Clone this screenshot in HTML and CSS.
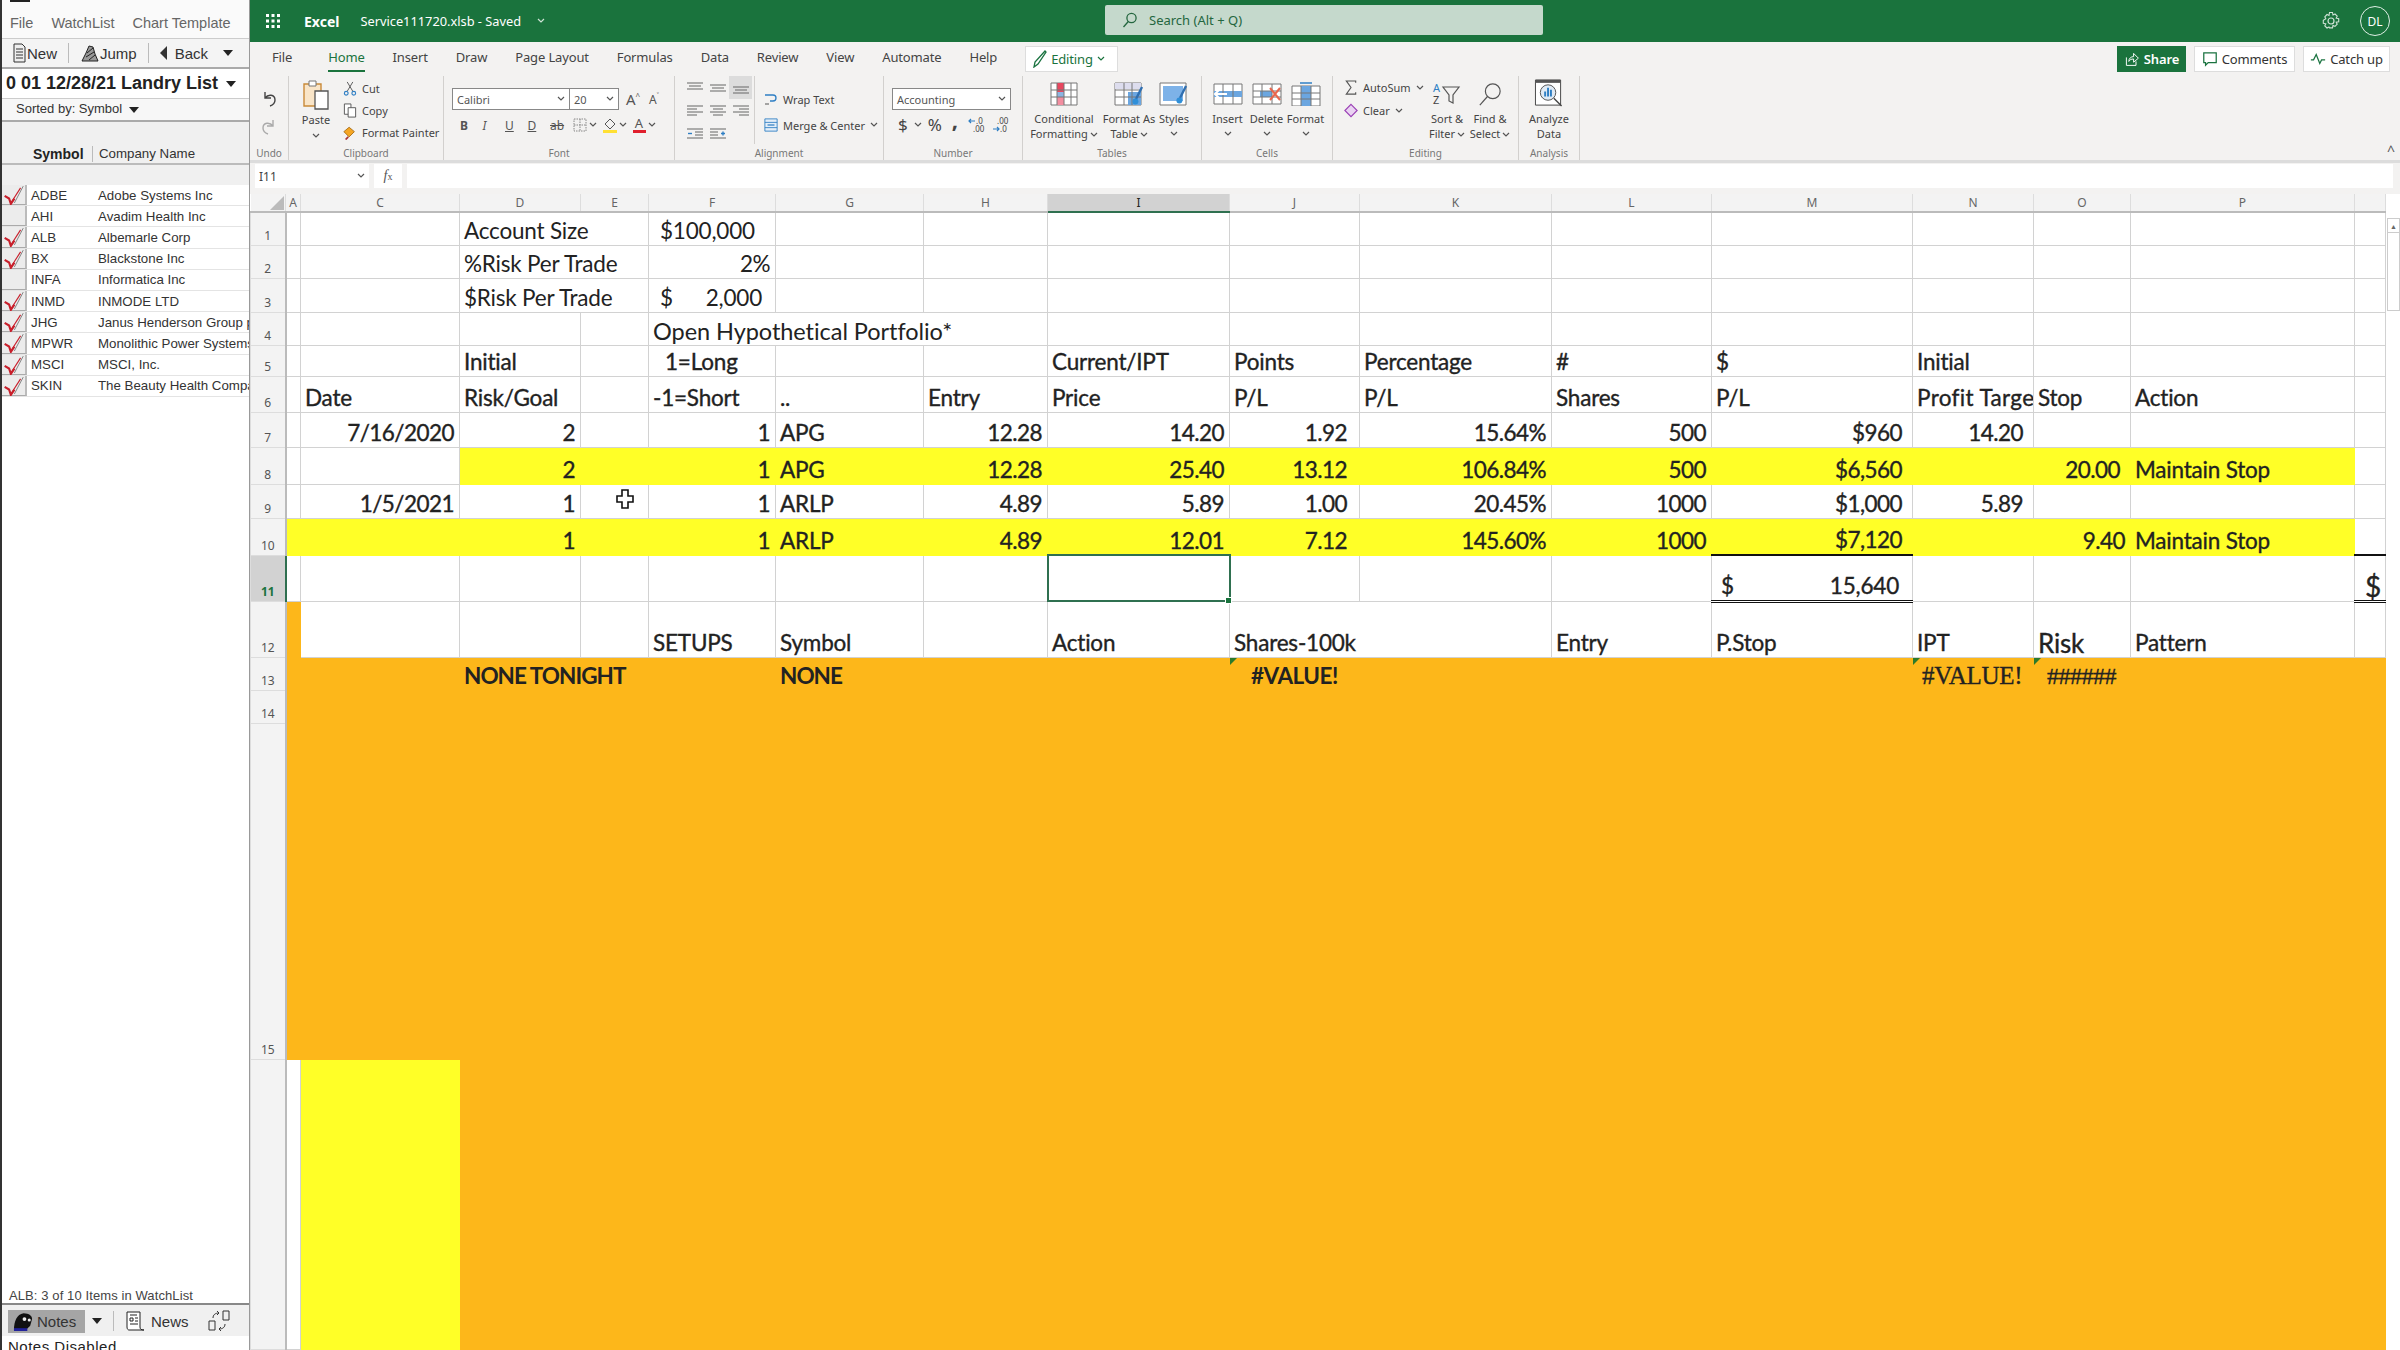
FILE: index.html
```html
<!DOCTYPE html>
<html lang="en">
<head>
  <meta charset="UTF-8" />
  <title>Excel - Service111720.xlsb</title>
  <link rel="stylesheet" href="styles.css">
</head>
<body>

  <svg class="defs" width="0" height="0">
    <symbol id="chev" viewBox="0 0 8 6"><path d="M1 1l3 3 3-3" fill="none" stroke="currentColor" stroke-width="1.2"/></symbol>
    <symbol id="check" viewBox="0 0 26 22"><path d="M14 20L24 1" stroke="#777" stroke-width="1"/><path d="M3 12l5 3 2 6 4-6" fill="none" stroke="#c8202c" stroke-width="2.4"/><path d="M10 20L21 3" stroke="#c8202c" stroke-width="1.3"/></symbol>
    <symbol id="lines-l" viewBox="0 0 18 14"><path d="M1 2h16M1 5h10M1 8h16M1 11h10" stroke="#666" stroke-width="1.2"/></symbol>
    <symbol id="lines-c" viewBox="0 0 18 14"><path d="M1 2h16M4 5h10M1 8h16M4 11h10" stroke="#666" stroke-width="1.2"/></symbol>
    <symbol id="lines-r" viewBox="0 0 18 14"><path d="M1 2h16M7 5h10M1 8h16M7 11h10" stroke="#666" stroke-width="1.2"/></symbol>
    <symbol id="brush" viewBox="0 0 12 20"><path d="M10 1L4 13" stroke="#2f6fb0" stroke-width="2.4"/><circle cx="3.4" cy="15.5" r="3" fill="#2f8fd8"/></symbol>
  </svg>

  <aside class="watch">
    <div class="watch-menu">
      <span>File</span><span>WatchList</span><span>Chart Template</span>
    </div>
    <div class="watch-tools">
      <svg class="w-ico" viewBox="0 0 16 20"><path d="M3 1h8l3 3v15H3zM5 6h7M5 9h7M5 12h7M5 15h7" fill="#eee" stroke="#333"/></svg>
      <span class="t-new">New</span>
      <i class="w-sep"></i>
      <svg class="w-ico jump" viewBox="0 0 20 20"><path d="M2 18l4-8 3-7 4 1 2 7 3 7z" fill="#999" stroke="#222"/><path d="M7 10l6-5M6 14l8-5M9 17l6-5" stroke="#222"/></svg>
      <span class="t-jump">Jump</span>
      <i class="w-sep"></i>
      <span class="tri-left"></span>
      <span class="t-back">Back</span>
      <span class="tri-down"></span>
    </div>
    <div class="watch-title">0 01 12/28/21 Landry List <span class="tri-down small"></span></div>
    <div class="watch-sort">Sorted by: Symbol <span class="tri-down small"></span></div>
    <div class="watch-band"></div>
    <div class="watch-head"><b>Symbol</b><span>Company Name</span></div>
    <div class="watch-band short"></div>
    <ul class="watch-list">
      <li><span class="ck"><svg><use href="#check"/></svg></span><span class="sym">ADBE</span><span class="co">Adobe Systems Inc</span></li>
      <li><span class="ck"></span><span class="sym">AHI</span><span class="co">Avadim Health Inc</span></li>
      <li><span class="ck"><svg><use href="#check"/></svg></span><span class="sym">ALB</span><span class="co">Albemarle Corp</span></li>
      <li><span class="ck"><svg><use href="#check"/></svg></span><span class="sym">BX</span><span class="co">Blackstone Inc</span></li>
      <li><span class="ck"></span><span class="sym">INFA</span><span class="co">Informatica Inc</span></li>
      <li><span class="ck"><svg><use href="#check"/></svg></span><span class="sym">INMD</span><span class="co">INMODE LTD</span></li>
      <li><span class="ck"><svg><use href="#check"/></svg></span><span class="sym">JHG</span><span class="co">Janus Henderson Group plc</span></li>
      <li><span class="ck"><svg><use href="#check"/></svg></span><span class="sym">MPWR</span><span class="co">Monolithic Power Systems Inc</span></li>
      <li><span class="ck"><svg><use href="#check"/></svg></span><span class="sym">MSCI</span><span class="co">MSCI, Inc.</span></li>
      <li><span class="ck"><svg><use href="#check"/></svg></span><span class="sym">SKIN</span><span class="co">The Beauty Health Company</span></li>
    </ul>
    <div class="watch-status">ALB: 3 of 10 Items in WatchList</div>
    <div class="watch-bottom">
      <span class="notes-btn">
        <svg viewBox="0 0 22 20"><path d="M1 19c0-8 3-16 10-17 6 0 9 3 9 6l-2 7-4 4z" fill="#111"/><path d="M1 19h14" stroke="#22229a" stroke-width="3"/><circle cx="12" cy="8" r="2" fill="#eee"/><circle cx="17" cy="9" r="1.6" fill="#eee"/></svg>
        Notes
      </span>
      <span class="tri-down"></span>
      <i class="w-sep"></i>
      <svg class="news-ico" viewBox="0 0 20 20"><path d="M2 1h13v15c0 2 1 3 4 3H4c-1 0-2-1-2-3zM5 4h7M5 7h3v3H5zM10 7h3M10 10h3M5 13h8" fill="#fff" stroke="#222"/></svg>
      <span class="news-txt">News</span>
      <svg class="swap-ico" viewBox="0 0 22 22"><path d="M1 11h6v9H1zM15 1h6v9h-6zM5 8c0-3 2-5 6-5M11 3l-2-2M11 3L9 5M17 14c0 3-2 5-6 5M11 19l2-2M11 19l2 2" fill="none" stroke="#333"/></svg>
    </div>
    <div class="watch-notes">Notes Disabled</div>
  </aside>

  <main class="excel">
    <header class="titlebar">
      <svg class="waffle" viewBox="0 0 14 14" fill="#fff"><rect width="3" height="3"/><rect x="5.5" width="3" height="3"/><rect x="11" width="3" height="3"/><rect y="5.5" width="3" height="3"/><rect x="5.5" y="5.5" width="3" height="3"/><rect x="11" y="5.5" width="3" height="3"/><rect y="11" width="3" height="3"/><rect x="5.5" y="11" width="3" height="3"/><rect x="11" y="11" width="3" height="3"/></svg>
      <strong class="app">Excel</strong>
      <span class="doc">Service111720.xlsb - Saved</span>
      <svg class="doc-chev"><use href="#chev"/></svg>
      <div class="search">
        <svg viewBox="0 0 16 16"><circle cx="9.5" cy="6" r="4.6" fill="none" stroke="#24663f" stroke-width="1.3"/><path d="M6.3 9.5L1.5 15" stroke="#24663f" stroke-width="1.3"/></svg>
        Search (Alt + Q)
      </div>
      <svg class="gear" viewBox="0 0 20 20"><circle cx="10" cy="10" r="3" fill="none" stroke="#cfe3d6" stroke-width="1.2"/><path d="M8.5 1.5h3l.5 2.5 2-1 2.2 2.2-1 2 2.5.5v3l-2.5.5 1 2-2.2 2.2-2-1-.5 2.5h-3L8 16l-2 1-2.2-2.2 1-2-2.5-.5v-3L4.800 7.800l-1-2L6 3.500l2 1z" fill="none" stroke="#cfe3d6" stroke-width="1.1"/></svg>
      <span class="avatar">DL</span>
    </header>

    <nav class="tabs">
      <span class="tab t-file">File</span>
      <span class="tab active">Home</span>
      <span class="tab">Insert</span>
      <span class="tab">Draw</span>
      <span class="tab">Page Layout</span>
      <span class="tab">Formulas</span>
      <span class="tab">Data</span>
      <span class="tab">Review</span>
      <span class="tab">View</span>
      <span class="tab">Automate</span>
      <span class="tab">Help</span>
      <span class="editing">
        <svg viewBox="0 0 14 18"><path d="M12 1l1 1L5 14l-4 3 1-5z" fill="none" stroke="#1a7340" stroke-width="1.3"/></svg>
        Editing
        <svg class="chev"><use href="#chev"/></svg>
      </span>
      <div class="tab-actions">
        <span class="act share">
          <svg viewBox="0 0 18 20"><path d="M2 8v10h12v-5M5 13c0-4 3-6 6-6V3l6 6-6 5v-4c-3 0-5 1-6 3z" fill="none" stroke="#fff" stroke-width="1.2"/></svg>
          Share
        </span>
        <span class="act comments">
          <svg viewBox="0 0 18 18"><path d="M2 2h14v11H7l-3 3v-3H2z" fill="none" stroke="#1a7340" stroke-width="1.4"/></svg>
          Comments
        </span>
        <span class="act catchup">
          <svg viewBox="0 0 18 14"><path d="M1 8h3l3-6 4 10 2-4h4" fill="none" stroke="#1a7340" stroke-width="1.4"/></svg>
          Catch up
        </span>
      </div>
    </nav>

    <section class="ribbon">
      <div class="grp g-undo">
        <div class="grp-body undo-col">
          <svg viewBox="0 0 16 18"><path d="M4 3v6h6M4 9c3-4 10-4 10 2 0 3-2 5-5 6" fill="none" stroke="#444" stroke-width="1.4"/></svg>
          <svg viewBox="0 0 16 18"><path d="M12 3v6H6M12 9C9 5 2 5 2 11c0 3 2 5 5 6" fill="none" stroke="#aaa" stroke-width="1.4"/></svg>
        </div>
        <div class="grp-label">Undo</div>
      </div>

      <div class="grp g-clip">
        <div class="grp-body clip-body">
          <div class="paste">
            <svg viewBox="0 0 28 30"><path d="M2 4h17v22H2z" fill="#f9e5c8" stroke="#c98a38" stroke-width="1.4"/><path d="M7 1h7v5H7z" fill="#fff" stroke="#777"/><path d="M13 11h13v18H13z" fill="#fff" stroke="#555" stroke-width="1.3"/></svg>
            <span>Paste</span>
            <svg class="chev"><use href="#chev"/></svg>
          </div>
          <div class="clip-list">
            <span><svg viewBox="0 0 14 16"><path d="M4 1l6 10M10 1L4 11" stroke="#555"/><circle cx="3" cy="13" r="2" fill="none" stroke="#2f7fc4" stroke-width="1.2"/><circle cx="11" cy="13" r="2" fill="none" stroke="#2f7fc4" stroke-width="1.2"/></svg>Cut</span>
            <span><svg viewBox="0 0 14 16"><path d="M1 1h7v11H1z" fill="#fff" stroke="#555"/><path d="M5 5h8v10H5z" fill="#fff" stroke="#555"/></svg>Copy</span>
            <span><svg viewBox="0 0 16 16"><path d="M1 7l6-5 6 5-6 6z" fill="#f5a623" stroke="#a66a12"/><path d="M6 13l-3 3" stroke="#a33" stroke-width="2"/></svg>Format Painter</span>
          </div>
        </div>
        <div class="grp-label">Clipboard</div>
      </div>

      <div class="grp g-font">
        <div class="grp-body pad-rows">
          <div class="ctl-row">
            <span class="combo fontname">Calibri<svg class="chev"><use href="#chev"/></svg></span>
            <span class="combo fontsize">20<svg class="chev"><use href="#chev"/></svg></span>
            <span class="grow-a">A<sup>^</sup></span>
            <span class="grow-a small">A<sup>˅</sup></span>
          </div>
          <div class="ctl-row fmt">
            <b>B</b><i>I</i><u>U</u><u class="dbl">D</u><s>ab</s>
            <svg class="bd" viewBox="0 0 14 14"><path d="M1 1h12v12H1zM7 1v12M1 7h12" fill="none" stroke="#888" stroke-dasharray="1.5 1"/></svg>
            <svg class="chev"><use href="#chev"/></svg>
            <span class="fill">
              <svg viewBox="0 0 14 12"><path d="M7 1l5 5-5 5-5-5z" fill="none" stroke="#555"/></svg>
            </span>
            <svg class="chev"><use href="#chev"/></svg>
            <span class="color">A</span>
            <svg class="chev"><use href="#chev"/></svg>
          </div>
        </div>
        <div class="grp-label">Font</div>
      </div>

      <div class="grp g-align">
        <div class="grp-body align-body">
          <div class="align-grid">
            <svg viewBox="0 0 18 14"><path d="M1 2h16M3 5h12M1 8h16" stroke="#666" stroke-width="1.2"/></svg>
            <svg viewBox="0 0 18 14"><path d="M1 4h16M3 7h12M1 10h16" stroke="#666" stroke-width="1.2"/></svg>
            <span class="on"><svg viewBox="0 0 18 14"><path d="M1 6h16M3 9h12M1 12h16" stroke="#666" stroke-width="1.2"/></svg></span>
            <svg><use href="#lines-l"/></svg>
            <svg><use href="#lines-c"/></svg>
            <svg><use href="#lines-r"/></svg>
            <svg viewBox="0 0 18 14"><path d="M1 2h16M9 5h8M9 8h8M1 11h16" stroke="#666" stroke-width="1.2"/><path d="M2 6.5h4" stroke="#2f7fc4" stroke-width="1.4"/></svg>
            <svg viewBox="0 0 18 14"><path d="M1 2h16M1 5h8M1 8h8M1 11h16" stroke="#666" stroke-width="1.2"/><path d="M12 6.5h4M14 4.500v4" stroke="#2f7fc4" stroke-width="1.4"/></svg>
          </div>
          <div class="wrap-col">
            <span class="ico-row"><svg viewBox="0 0 14 14"><path d="M1 3h8c4 0 4 6 0 6H6" fill="none" stroke="#2f7fc4" stroke-width="1.3"/><path d="M1 12h4" stroke="#555"/></svg>Wrap Text</span>
            <span class="ico-row"><svg viewBox="0 0 16 16"><path d="M1 1h14v14H1zM1 5h14M1 11h14" fill="#e3eef8" stroke="#2f7fc4"/><path d="M4 8h8" stroke="#2f7fc4" stroke-width="1.4"/></svg>Merge &amp; Center<svg class="chev"><use href="#chev"/></svg></span>
          </div>
        </div>
        <div class="grp-label">Alignment</div>
      </div>

      <div class="grp g-num">
        <div class="grp-body pad-rows">
          <div class="ctl-row">
            <span class="combo numfmt">Accounting<svg class="chev"><use href="#chev"/></svg></span>
          </div>
          <div class="ctl-row numbtns">
            <span class="n-big">$</span><svg class="chev"><use href="#chev"/></svg>
            <span class="n-big">%</span>
            <span class="n-comma">,</span>
            <svg class="dec" viewBox="0 0 18 16"><path d="M1 4h6M3 2L1 4l2 2" fill="none" stroke="#2f7fc4" stroke-width="1.2"/><text x="8" y="7" font-size="8" fill="#444">.0</text><text x="5" y="15" font-size="8" fill="#444">.00</text></svg>
            <svg class="dec" viewBox="0 0 18 16"><path d="M1 12h6M5 10l2 2-2 2" fill="none" stroke="#2f7fc4" stroke-width="1.2"/><text x="5" y="7" font-size="8" fill="#444">.00</text><text x="8" y="15" font-size="8" fill="#444">.0</text></svg>
          </div>
        </div>
        <div class="grp-label">Number</div>
      </div>

      <div class="grp g-tables">
        <div class="grp-body bigs">
          <div class="big w-cond">
            <svg viewBox="0 0 28 24"><path d="M1 1h26v22H1z" fill="#fff" stroke="#777"/><path d="M7 1h7v9H7z" fill="#e8475f"/><path d="M7 10h7v5H7z" fill="#8db4e2"/><path d="M7 15h7v8H7z" fill="#f28ea0"/><path d="M1 8h26M1 15h26M7 1v22M14 1v22M21 1v22" stroke="#777" fill="none"/></svg>
            <span>Conditional</span>
            <span>Formatting<svg class="chev"><use href="#chev"/></svg></span>
          </div>
          <div class="big w-tbl">
            <svg viewBox="0 0 30 24"><path d="M1 1h26v22H1z" fill="#fff" stroke="#777"/><path d="M1 1h26v6H1z" fill="#dde"/><path d="M14 10h13v13H14z" fill="#6ba6e0"/><path d="M1 8h26M1 15h26M10 1v22M18 1v22" stroke="#777" fill="none"/><use href="#brush" x="18" y="4" width="12" height="20"/></svg>
            <span>Format As</span>
            <span>Table<svg class="chev"><use href="#chev"/></svg></span>
          </div>
          <div class="big w-sty">
            <svg viewBox="0 0 30 24"><path d="M1 1h26v22H1z" fill="#fff" stroke="#777"/><path d="M4 4h20v15H4z" fill="#7db2e8"/><use href="#brush" x="17" y="3" width="12" height="20"/></svg>
            <span>Styles</span>
            <svg class="chev"><use href="#chev"/></svg>
          </div>
        </div>
        <div class="grp-label">Tables</div>
      </div>

      <div class="grp g-cells">
        <div class="grp-body bigs">
          <div class="big w-cell">
            <svg viewBox="0 0 30 24"><path d="M1 2h28v20H1z" fill="#fff" stroke="#777"/><path d="M1 9h28v6H1z" fill="#6ba6e0"/><path d="M10 2v20M20 2v20" stroke="#777"/><path d="M2 12h12M6 8l-4 4 4 4" fill="none" stroke="#fff" stroke-width="2"/></svg>
            <span>Insert</span><svg class="chev"><use href="#chev"/></svg>
          </div>
          <div class="big w-cell">
            <svg viewBox="0 0 30 24"><path d="M1 2h28v20H1z" fill="#fff" stroke="#777"/><path d="M8 9h12v6H8z" fill="#6ba6e0"/><path d="M10 2v20M20 2v20M1 9h28M1 15h28" stroke="#777"/><path d="M18 6l10 12M28 6L18 18" stroke="#e8664d" stroke-width="2"/></svg>
            <span>Delete</span><svg class="chev"><use href="#chev"/></svg>
          </div>
          <div class="big w-cell">
            <svg viewBox="0 0 30 24"><path d="M1 4h28v20H1z" fill="#fff" stroke="#777"/><path d="M10 4h10v20H10z" fill="#6ba6e0"/><path d="M1 11h28M1 17h28M10 4v20M20 4v20" stroke="#777"/><path d="M9 1h12" stroke="#2f7fc4" stroke-width="1.5"/></svg>
            <span>Format</span><svg class="chev"><use href="#chev"/></svg>
          </div>
        </div>
        <div class="grp-label">Cells</div>
      </div>

      <div class="grp g-edit">
        <div class="grp-body edit-body">
          <div class="edit-list">
            <span><svg viewBox="0 0 14 16"><path d="M12 3V1H2l5 7-5 7h10v-2" fill="none" stroke="#555" stroke-width="1.2"/></svg>AutoSum<svg class="chev"><use href="#chev"/></svg></span>
            <span><svg viewBox="0 0 16 16"><path d="M8 1l7 7-7 7-7-7z" fill="#e9d3f2" stroke="#9a3fb5" stroke-width="1.3"/></svg>Clear<svg class="chev"><use href="#chev"/></svg></span>
          </div>
          <div class="big w-sort">
            <svg viewBox="0 0 30 24"><text x="1" y="10" font-size="11" fill="#2f7fc4">A</text><text x="1" y="22" font-size="11" fill="#444">Z</text><path d="M11 5h16l-6 8v8l-4-2v-6z" fill="none" stroke="#555" stroke-width="1.2"/></svg>
            <span>Sort &amp;</span>
            <span>Filter<svg class="chev"><use href="#chev"/></svg></span>
          </div>
          <div class="big w-find">
            <svg viewBox="0 0 30 26"><circle cx="18" cy="10" r="8" fill="none" stroke="#555" stroke-width="1.3"/><path d="M12 16L4 25" stroke="#555" stroke-width="1.3"/></svg>
            <span>Find &amp;</span>
            <span>Select<svg class="chev"><use href="#chev"/></svg></span>
          </div>
        </div>
        <div class="grp-label">Editing</div>
      </div>

      <div class="grp g-ana">
        <div class="grp-body bigs">
          <div class="big w-ana">
            <svg viewBox="0 0 30 30"><path d="M1 1h26v26H1z" fill="#fff" stroke="#444"/><path d="M1 1h26v3H1z" fill="#555"/><circle cx="14" cy="14" r="8" fill="#dfeaf5" stroke="#555"/><path d="M11 18v-5M14 18V9M17 18v-7" stroke="#2f7fc4" stroke-width="2"/><path d="M20 20l8 8" stroke="#444" stroke-width="1.5"/></svg>
            <span>Analyze</span>
            <span>Data</span>
          </div>
        </div>
        <div class="grp-label">Analysis</div>
      </div>
      <span class="collapse">^</span>
    </section>

    <div class="formula">
      <span class="namebox">I11<svg class="chev"><use href="#chev"/></svg></span>
      <span class="fx"><em>f</em><small>x</small></span>
      <span class="fbar"></span>
    </div>

    <div class="sheet">
      <table class="grid">
        <colgroup>
          <col class="c-rh"><col class="c-a"><col class="c-c"><col class="c-d"><col class="c-e"><col class="c-f"><col class="c-g"><col class="c-h"><col class="c-i"><col class="c-j"><col class="c-k"><col class="c-l"><col class="c-m"><col class="c-n"><col class="c-o"><col class="c-p"><col class="c-q">
        </colgroup>
        <thead>
          <tr>
            <th class="corner"><svg viewBox="0 0 14 14"><path d="M14 0v14H0z" fill="#bbb"/></svg></th>
            <th>A</th><th>C</th><th>D</th><th>E</th><th>F</th><th>G</th><th>H</th><th class="sel">I</th><th>J</th><th>K</th><th>L</th><th>M</th><th>N</th><th>O</th><th>P</th><th></th>
          </tr>
        </thead>
        <tbody>
          <tr class="r1"><th>1</th><td></td><td></td><td colspan="2">Account Size</td><td class="in">$100,000</td><td></td><td></td><td></td><td></td><td></td><td></td><td></td><td></td><td></td><td></td><td></td></tr>
          <tr class="r2"><th>2</th><td></td><td></td><td colspan="2">%Risk Per Trade</td><td class="n">2%</td><td></td><td></td><td></td><td></td><td></td><td></td><td></td><td></td><td></td><td></td><td></td></tr>
          <tr class="r3"><th>3</th><td></td><td></td><td colspan="2">$Risk Per Trade</td><td class="acct in"><span>$</span><span>2,000</span></td><td></td><td></td><td></td><td></td><td></td><td></td><td></td><td></td><td></td><td></td><td></td></tr>
          <tr class="r4"><th>4</th><td></td><td></td><td></td><td></td><td colspan="3" class="wide">Open Hypothetical Portfolio*</td><td></td><td></td><td></td><td></td><td></td><td></td><td></td><td></td><td></td></tr>
          <tr class="r5 m"><th>5</th><td></td><td></td><td>Initial</td><td></td><td class="in2">1=Long</td><td></td><td></td><td>Current/IPT</td><td>Points</td><td>Percentage</td><td>#</td><td>$</td><td>Initial</td><td></td><td></td><td></td></tr>
          <tr class="r6 m"><th>6</th><td></td><td>Date</td><td>Risk/Goal</td><td></td><td>-1=Short</td><td>..</td><td>Entry</td><td>Price</td><td>P/L</td><td>P/L</td><td>Shares</td><td>P/L</td><td class="clip">Profit Target</td><td>Stop</td><td>Action</td><td></td></tr>
          <tr class="r7 m"><th>7</th><td></td><td class="n">7/16/2020</td><td class="n">2</td><td></td><td class="n">1</td><td>APG</td><td class="n">12.28</td><td class="n">14.20</td><td class="n p12">1.92</td><td class="n">15.64%</td><td class="n">500</td><td class="n p10">$960</td><td class="n p10">14.20</td><td></td><td></td><td></td></tr>
          <tr class="r8 m"><th>8</th><td></td><td></td><td class="y n">2</td><td class="y"></td><td class="y n">1</td><td class="y">APG</td><td class="y n">12.28</td><td class="y n">25.40</td><td class="y n p12">13.12</td><td class="y n">106.84%</td><td class="y n">500</td><td class="y n p10">$6,560</td><td class="y"></td><td class="y n p10">20.00</td><td class="y">Maintain Stop</td><td></td></tr>
          <tr class="r9 m"><th>9</th><td></td><td class="n">1/5/2021</td><td class="n">1</td><td class="cursor-cell"><svg class="cross" viewBox="0 0 18 20"><path d="M6 1h6v6h5v6h-5v6H6v-6H1V7h5z" fill="#fff" stroke="#111" stroke-width="1.6"/></svg></td><td class="n">1</td><td>ARLP</td><td class="n">4.89</td><td class="n">5.89</td><td class="n p12">1.00</td><td class="n">20.45%</td><td class="n">1000</td><td class="n p10">$1,000</td><td class="n p10">5.89</td><td></td><td></td><td></td></tr>
          <tr class="r10 m"><th>10</th><td class="y"></td><td class="y"></td><td class="y n">1</td><td class="y"></td><td class="y n">1</td><td class="y">ARLP</td><td class="y n">4.89</td><td class="y n">12.01</td><td class="y n p12">7.12</td><td class="y n">145.60%</td><td class="y n">1000</td><td class="y n p10 line">$7,120</td><td class="y"></td><td class="y n">9.40</td><td class="y">Maintain Stop</td><td class="line"></td></tr>
          <tr class="r11 m"><th class="on">11</th><td></td><td></td><td></td><td></td><td></td><td></td><td></td><td class="active"></td><td></td><td></td><td></td><td class="acct total"><span>$</span><span>15,640</span></td><td></td><td></td><td></td><td class="total big-d">$</td></tr>
          <tr class="r12 m"><th>12</th><td class="o"></td><td></td><td></td><td></td><td>SETUPS</td><td>Symbol</td><td></td><td>Action</td><td colspan="2">Shares-100k</td><td>Entry</td><td>P.Stop</td><td>IPT</td><td class="risk">Risk</td><td>Pattern</td><td></td></tr>
          <tr class="r13 m fill-o"><th>13</th><td></td><td></td><td colspan="3" class="b">NONE TONIGHT</td><td class="b">NONE</td><td></td><td></td><td class="b err tri">#VALUE!</td><td></td><td></td><td></td><td class="serif tri">#VALUE!</td><td class="serif2 tri">######</td><td></td><td></td></tr>
          <tr class="r14 fill-o"><th>14</th><td colspan="16"></td></tr>
          <tr class="r15 fill-o"><th>15</th><td colspan="16"></td></tr>
          <tr class="r16"><th></th><td></td><td class="y"></td><td colspan="14" class="o"></td></tr>
        </tbody>
      </table>
      <div class="vscroll">
        <span class="v-up">▲</span>
        <span class="v-thumb"></span>
      </div>
    </div>
  </main>

</body>
</html>
```

FILE: styles.css
```css
* {
  box-sizing: border-box;
}
html, body {
  margin: 0;
  height: 1350px;
  overflow: hidden;
}
body {
  display: flex;
  width: 2400px;
  font-family: "Noto Sans", "Liberation Sans", sans-serif;
  color: #333;
  background: #fff;
}
.defs {
  position: absolute;
}
.chev {
  width: 8px;
  height: 6px;
  color: #555;
  flex: none;
}

/* watchlist panel */
.watch {
  width: 250px;
  flex: none;
  height: 1350px;
  display: flex;
  flex-direction: column;
  border-left: 2px solid #333;
  border-right: 1px solid #999;
  font-family: "Liberation Sans", Arial, sans-serif;
  overflow: hidden;
}
.watch-menu {
  height: 38px;
  padding: 15px 0 0 8px;
  display: flex;
  gap: 18px;
  font-size: 14.5px;
  color: #666;
  background: #fafafa;
  position: relative;
}
.watch-menu::before {
  content: "";
  position: absolute;
  left: 8px;
  top: 0;
  width: 20px;
  height: 2px;
  background: #222;
}
.watch-tools {
  height: 31px;
  display: flex;
  align-items: center;
  padding-left: 9px;
  font-size: 15px;
  color: #333;
  background: #f4f4f4;
  border-top: 1px solid #ccc;
  border-bottom: 2px solid #aaa;
}
.w-ico {
  width: 16px;
  height: 20px;
  flex: none;
}
.w-ico.jump {
  width: 20px;
}
.w-sep {
  width: 1px;
  height: 20px;
  background: #bbb;
  margin: 0 11px;
  flex: none;
}
.tri-left {
  border-right: 7px solid #333;
  border-top: 7px solid transparent;
  border-bottom: 7px solid transparent;
  margin-right: 8px;
}
.tri-down {
  border-top: 6px solid #222;
  border-left: 5px solid transparent;
  border-right: 5px solid transparent;
  display: inline-block;
  vertical-align: middle;
}
.tri-down.small {
  margin-left: 3px;
}
.t-back {
  margin-right: 15px;
}
.watch-title {
  height: 30px;
  padding: 4px 0 0 4px;
  font-weight: bold;
  font-size: 18px;
  color: #222;
  white-space: nowrap;
  border-bottom: 1px solid #ccc;
}
.watch-sort {
  height: 23px;
  padding: 2px 0 0 14px;
  font-size: 13px;
  background: #f7f7f7;
  border-bottom: 2px solid #aaa;
}
.watch-band {
  height: 22px;
  background: #f0f0f0;
}
.watch-band.short {
  height: 20px;
}
.watch-head {
  height: 21px;
  display: flex;
  align-items: center;
  font-size: 14px;
  background: #f0f0f0;
  padding-left: 31px;
  border-bottom: 2px solid #bbb;
}
.watch-head b {
  width: 60px;
  border-right: 1px solid #bbb;
  color: #222;
}
.watch-head span {
  padding-left: 6px;
  font-size: 13.300px;
  color: #333;
}
.watch-list {
  list-style: none;
  margin: 0;
  padding: 0;
  flex: 1;
}
.watch-list li {
  height: 21.2px;
  display: flex;
  align-items: center;
  font-size: 13.300px;
  white-space: nowrap;
  border-bottom: 1px solid #e4e4e4;
}
.ck {
  width: 25px;
  height: 100%;
  flex: none;
  background: #ececec;
  border-right: 2px solid #bbb;
  border-bottom: 1px solid #aaa;
}
.ck svg {
  width: 23px;
  height: 20px;
  display: block;
}
.sym {
  width: 71px;
  padding-left: 4px;
  flex: none;
}
.watch-status {
  height: 22px;
  padding: 5px 0 0 7px;
  font-size: 13px;
  color: #444;
  letter-spacing: .1px;
  border-bottom: 2px solid #888;
}
.watch-bottom {
  height: 31px;
  display: flex;
  align-items: center;
  padding: 1px 0 0 6px;
  font-size: 15px;
  background: #f0f0f0;
}
.notes-btn {
  width: 77px;
  height: 23px;
  display: flex;
  align-items: center;
  gap: 3px;
  padding-left: 5px;
  background: #a5a5a5;
  margin-right: 7px;
}
.notes-btn svg {
  width: 21px;
  height: 20px;
}
.news-ico {
  width: 20px;
  height: 20px;
  margin-right: 6px;
}
.news-txt {
  margin-right: 19px;
}
.swap-ico {
  width: 22px;
  height: 22px;
}
.watch-notes {
  height: 14px;
  font-size: 15px;
  color: #222;
  padding: 2px 0 0 6px;
  letter-spacing: .5px;
  white-space: nowrap;
}

/* excel */
.excel {
  flex: 1;
  min-width: 0;
  display: flex;
  flex-direction: column;
  background: #f3f2f1;
}
.titlebar {
  height: 42px;
  background: #1a733d;
  color: #fff;
  display: flex;
  align-items: center;
  position: relative;
  padding-left: 16px;
  font-size: 13px;
}
.waffle {
  width: 14px;
  height: 14px;
}
.app {
  margin-left: 24px;
  font-size: 14px;
}
.doc {
  margin-left: 21px;
  font-size: 12.800px;
}
.doc-chev {
  width: 8px;
  height: 6px;
  margin-left: 16px;
  color: #cfe3d6;
}
.search {
  position: absolute;
  left: 855px;
  top: 5px;
  width: 438px;
  height: 30px;
  background: #c5d9cc;
  color: #24663f;
  border-radius: 2px;
  display: flex;
  align-items: center;
  padding-left: 17px;
  gap: 11px;
  font-size: 13px;
}
.search svg {
  width: 16px;
  height: 16px;
}
.gear {
  width: 20px;
  height: 20px;
  margin-left: auto;
  margin-right: 19px;
}
.avatar {
  width: 30px;
  height: 30px;
  border: 1px solid #dfeee5;
  border-radius: 50%;
  display: flex;
  align-items: center;
  justify-content: center;
  font-size: 12px;
  margin-right: 10px;
}

.tabs {
  height: 30px;
  display: flex;
  align-items: center;
  font-size: 13px;
  letter-spacing: -.15px;
  color: #444;
  padding-left: 22px;
  position: relative;
}
.tab {
  margin-right: 28px;
  height: 30px;
  line-height: 30px;
  position: relative;
}
.tab.t-file {
  margin-right: 36px;
}
.tab.active {
  color: #1a733d;
}
.tab.active::after {
  content: "";
  position: absolute;
  left: 0;
  right: 0;
  bottom: 0;
  height: 2px;
  background: #1a733d;
}
.editing {
  display: flex;
  align-items: center;
  gap: 4px;
  width: 93px;
  height: 26px;
  margin-top: 4px;
  padding-left: 7px;
  background: #fff;
  border: 1px solid #ddd;
  color: #1a733d;
}
.editing svg:first-child {
  width: 14px;
  height: 18px;
}
.editing .chev {
  color: #1a733d;
}
.tab-actions {
  margin-left: auto;
  margin-right: 10px;
  margin-top: 4px;
  display: flex;
  gap: 8px;
}
.act {
  height: 26px;
  display: flex;
  align-items: center;
  justify-content: center;
  gap: 4px;
  background: #fff;
  border: 1px solid #ddd;
  color: #333;
}
.act svg {
  width: 16px;
  height: 16px;
}
.share {
  width: 69px;
  background: #1a733d;
  border-color: #1a733d;
  color: #fff;
  font-weight: 600;
}
.comments {
  width: 101px;
}
.catchup {
  width: 87px;
}

/* ribbon */
.ribbon {
  height: 91px;
  display: flex;
  padding-top: 4px;
  font-size: 11px;
  color: #444;
  position: relative;
  border-bottom: 3px solid #dcdcdc;
}
.grp {
  height: 84px;
  flex: none;
  display: flex;
  flex-direction: column;
  border-right: 1px solid #d2d0ce;
}
.grp-body {
  height: 70px;
  flex: none;
}
.grp-label {
  height: 14px;
  line-height: 14px;
  text-align: center;
  font-size: 10px;
  color: #777;
}
.g-undo { width: 39px; }
.g-clip { width: 155px; }
.g-font { width: 231px; }
.g-align { width: 209px; }
.g-num { width: 139px; }
.g-tables { width: 179px; }
.g-cells { width: 131px; }
.g-edit { width: 186px; }
.g-ana { width: 61px; border-right: 1px solid #d2d0ce; }

.undo-col {
  display: flex;
  flex-direction: column;
  align-items: center;
  gap: 10px;
  padding-top: 13px;
}
.undo-col svg {
  width: 16px;
  height: 18px;
}
.clip-body {
  display: flex;
}
.paste {
  width: 54px;
  display: flex;
  flex-direction: column;
  align-items: center;
  padding-top: 4px;
  flex: none;
}
.paste > svg:first-child {
  width: 28px;
  height: 30px;
  margin-bottom: 2px;
}
.paste .chev {
  margin-top: 6px;
}
.clip-list {
  display: flex;
  flex-direction: column;
  padding-top: 1px;
}
.clip-list span {
  height: 22px;
  display: flex;
  align-items: center;
  gap: 5px;
  white-space: nowrap;
}
.clip-list svg {
  width: 14px;
  height: 15px;
  flex: none;
}
.pad-rows {
  padding: 12px 0 0 8px;
}
.ctl-row {
  display: flex;
  align-items: center;
  height: 22px;
}
.combo {
  height: 22px;
  background: #fff;
  border: 1px solid #888;
  display: flex;
  align-items: center;
  justify-content: space-between;
  padding: 0 4px;
  color: #555;
}
.fontname { width: 118px; }
.fontsize { width: 50px; margin-left: -1px; }
.numfmt { width: 119px; }
.grow-a {
  font-size: 15px;
  margin-left: 7px;
  width: 17px;
  color: #555;
}
.grow-a.small {
  font-size: 12px;
  margin-left: 6px;
}
.grow-a sup {
  font-size: 8px;
}
.fmt {
  margin-top: 4px;
  gap: 0;
  font-family: "Liberation Serif", serif;
  color: #555;
  font-size: 13px;
  padding-left: 8px;
}
.fmt b, .fmt i, .fmt u, .fmt s {
  width: 22.5px;
  font-family: "Noto Sans", sans-serif;
  font-size: 12px;
}
.bd {
  width: 14px;
  height: 14px;
}
.fmt .chev {
  margin: 0 6px 0 2px;
}
.fill {
  width: 14px;
  height: 15px;
  border-bottom: 3px solid #ffe033;
}
.fill svg {
  width: 14px;
  height: 12px;
  display: block;
}
.color {
  width: 13px;
  font-family: "Noto Sans", sans-serif;
  font-size: 13px;
  line-height: 13px;
  text-align: center;
  border-bottom: 3px solid #e01f2d;
}
.align-body {
  display: flex;
}
.align-grid {
  width: 80px;
  padding-left: 8px;
  display: grid;
  grid-template-columns: repeat(3, 23px);
  grid-auto-rows: 23px;
  align-items: center;
  justify-items: center;
  border-right: 1px solid #d2d0ce;
  height: 68px;
  flex: none;
}
.align-grid svg {
  width: 18px;
  height: 14px;
}
.align-grid .on {
  width: 23px;
  height: 23px;
  background: #dcdcdc;
  display: flex;
  align-items: center;
  justify-content: center;
}
.wrap-col {
  padding: 15px 0 0 9px;
  display: flex;
  flex-direction: column;
  gap: 10px;
}
.ico-row {
  height: 16px;
  display: flex;
  align-items: center;
  gap: 5px;
  white-space: nowrap;
}
.ico-row > svg:first-child {
  width: 14px;
  height: 14px;
}
.numbtns {
  margin-top: 4px;
  padding-left: 6px;
  gap: 6px;
}
.n-big {
  font-size: 17px;
  line-height: 22px;
}
.n-comma {
  font-size: 22px;
  line-height: 14px;
  font-weight: 700;
  width: 14px;
  text-align: center;
  transform: translateY(-6px);
}
.dec {
  width: 18px;
  height: 16px;
}
.bigs {
  display: flex;
}
.big {
  display: flex;
  flex-direction: column;
  align-items: center;
  flex: none;
  padding-top: 6px;
  line-height: 15px;
  white-space: nowrap;
}
.big > svg:first-child {
  width: 30px;
  height: 24px;
  margin-bottom: 5px;
}
.big span .chev {
  margin-left: 2px;
}
.big > .chev {
  margin-top: 5px;
}
.w-cond { width: 78px; margin-left: 2px; }
.w-tbl { width: 52px; margin-left: 0; }
.w-sty { width: 38px; margin-left: 0; }
.w-cell { width: 39px; }
.g-cells .bigs { padding-left: 6px; }
.edit-body {
  display: flex;
}
.edit-list {
  width: 92px;
  padding: 0 0 0 11px;
  display: flex;
  flex-direction: column;
  flex: none;
}
.edit-list span {
  height: 23px;
  display: flex;
  align-items: center;
  gap: 5px;
}
.edit-list svg:first-child {
  width: 14px;
  height: 15px;
}
.w-sort { width: 44px; }
.w-find { width: 42px; }
.w-ana { width: 60px; padding-top: 3px; }
.w-ana > svg:first-child {
  height: 29px;
  margin-bottom: 3px;
}
.collapse {
  position: absolute;
  right: 5px;
  bottom: 0;
  font-size: 14px;
  color: #555;
}

/* formula bar */
.formula {
  height: 31px;
  display: flex;
  padding: 1px 7px 6px 5px;
  font-size: 12px;
  gap: 5px;
}
.namebox {
  width: 114px;
  background: #fff;
  display: flex;
  align-items: center;
  justify-content: space-between;
  padding: 0 4px;
  color: #444;
}
.fx {
  width: 28px;
  background: #fff;
  display: flex;
  align-items: center;
  justify-content: center;
  font-family: "Liberation Serif", serif;
  font-size: 14px;
  color: #555;
}
.fx small {
  font-size: 10px;
}
.fbar {
  flex: 1;
  background: #fff;
}

/* sheet */
.sheet {
  flex: 1;
  display: flex;
  background: #fff;
  min-height: 0;
}
.grid {
  border-collapse: collapse;
  table-layout: fixed;
  width: 2135px;
  font-family: Lato, "Liberation Sans", sans-serif;
  font-size: 22.5px;
  letter-spacing: -.2px;
  color: #222;
  flex: none;
}
.c-rh { width: 35px; }
.c-a { width: 15px; }
.c-c { width: 159px; }
.c-d { width: 121px; }
.c-e { width: 68px; }
.c-f { width: 127px; }
.c-g { width: 148px; }
.c-h { width: 124px; }
.c-i { width: 182px; }
.c-j { width: 130px; }
.c-k { width: 192px; }
.c-l { width: 160px; }
.c-m { width: 201px; }
.c-n { width: 121px; }
.c-o { width: 97px; }
.c-p { width: 224px; }
.c-q { width: 31px; }

.grid thead th {
  height: 18px;
  font: 400 12px "Noto Sans", sans-serif;
  letter-spacing: 0;
  color: #666;
  background: #f3f3f3;
  border-right: 1px solid #ddd;
  border-bottom: 2px solid #bbb;
  padding: 0;
}
.grid thead th.sel {
  background: #d2d2d2;
  border-bottom: 2px solid #2f7050;
  color: #222;
}
.corner svg {
  width: 14px;
  height: 14px;
  float: right;
  margin-right: 1px;
}
.grid tbody th {
  font: 400 12px "Noto Sans", sans-serif;
  letter-spacing: 0;
  color: #555;
  background: #f3f3f3;
  border: 1px solid #ddd;
  border-right: 2px solid #bbb;
  vertical-align: bottom;
  padding: 0 0 1px;
}
.grid tbody th.on {
  background: #d2d2d2;
  color: #1a733d;
  font-weight: 700;
  border-right: 2px solid #2f7050;
}
.grid td {
  border: 1px solid #d2d2d2;
  padding: 0 4px;
  vertical-align: bottom;
  white-space: nowrap;
  line-height: 28px;
  position: relative;
}
.r1 { height: 33px; }
.r2 { height: 33px; }
.r3 { height: 34px; }
.r4 { height: 33px; }
.r5 { height: 31px; }
.r6 { height: 36px; }
.r7 { height: 35px; }
.r8 { height: 37px; }
.r9 { height: 34px; }
.r10 { height: 37px; }
.r11 { height: 46px; }
.r12 { height: 56px; }
.r13 { height: 33px; }
.r14 { height: 33px; }
.r15 { height: 336px; }
.r16 { height: 290px; }

.m td {
  -webkit-text-stroke: .35px #222;
}
.grid .n {
  text-align: right;
  padding-right: 5px;
  letter-spacing: -.55px;
}
.grid .p10 {
  padding-right: 10px;
}
.grid .p12 {
  padding-right: 12px;
}
.grid .in {
  padding-left: 11px;
}
.grid .in2 {
  padding-left: 16px;
}
.grid .wide {
  font-size: 23.5px;
  letter-spacing: -.05px;
}
.grid .clip {
  overflow: hidden;
  letter-spacing: .35px;
}
.grid .acct span:first-child {
  float: left;
}
.grid .acct span:last-child {
  float: right;
  padding-right: 9px;
}
.grid .y {
  background: #ffff27;
  border-color: #ffff27;
}
.grid .o {
  background: #fdb71a;
  border-color: #fdb71a;
}
.fill-o td {
  background: #fdb71a;
  border-color: #fdb71a;
  padding-left: 4px;
}
.grid td.line {
  border-bottom: 2px solid #111;
}
.grid .total {
  border-bottom: 3px double #111;
  background: #fff;
}
.grid .acct.total {
  padding-left: 9px;
}
.grid .acct.total span:last-child {
  padding-right: 9px;
}
.big-d {
  font-size: 28px;
  text-align: right;
  padding-right: 8px;
}
.grid td.active {
  outline: 2px solid #2f7050;
  outline-offset: -1px;
}
.grid td.active::after {
  content: "";
  position: absolute;
  right: -3px;
  bottom: -3px;
  width: 5px;
  height: 5px;
  background: #1a733d;
  border: 1px solid #fff;
}
.cursor-cell {
  overflow: visible;
}
.cross {
  position: absolute;
  left: 35px;
  top: 4px;
  width: 18px;
  height: 20px;
}
.risk {
  font-size: 26px;
}
.grid .b {
  font-weight: 700;
  -webkit-text-stroke: 0;
  letter-spacing: -.95px;
}
.grid .err {
  padding-left: 21px;
  letter-spacing: -.5px;
}
.serif {
  font-family: "Liberation Serif", serif;
  font-size: 25px;
  letter-spacing: -.3px;
}
.grid .serif {
  padding-left: 9px;
}
.serif2 {
  font-family: "Liberation Serif", serif;
  font-size: 24px;
  letter-spacing: -.5px;
}
.grid .serif2 {
  padding-left: 13px;
}
.grid td.tri::before {
  content: "";
  position: absolute;
  left: 0;
  top: 0;
  border-top: 7px solid #2b7a2b;
  border-right: 7px solid transparent;
}

.vscroll {
  width: 15px;
  flex: none;
  background: #fff;
  display: flex;
  flex-direction: column;
  padding: 24px 1px 0 1px;
}
.v-up {
  height: 15px;
  font-size: 7px;
  line-height: 15px;
  text-align: center;
  color: #666;
  border: 1px solid #ccc;
}
.v-thumb {
  height: 78px;
  border: 1px solid #ccc;
  border-top: 0;
}
```
